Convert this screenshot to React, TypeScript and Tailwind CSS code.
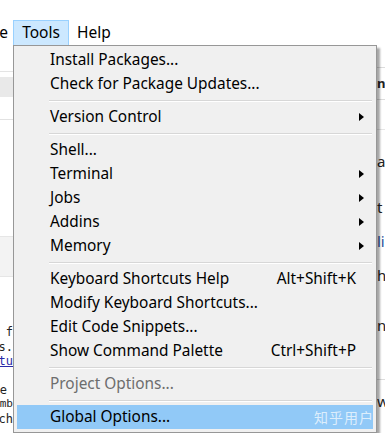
import React from "react";

const font = { fontFamily: '"Noto Sans", "Open Sans", sans-serif' };

function Arrow() {
  return (
    <svg width="5" height="8" viewBox="0 0 5 8" className="block">
      <path d="M0 0 L5 4 L0 8 Z" fill="#000" />
    </svg>
  );
}

type Item =
  | { sep: true }
  | { label: string; shortcut?: string; sub?: boolean; disabled?: boolean; active?: boolean };

const items: Item[] = [
  { label: "Install Packages..." },
  { label: "Check for Package Updates..." },
  { sep: true },
  { label: "Version Control", sub: true },
  { sep: true },
  { label: "Shell..." },
  { label: "Terminal", sub: true },
  { label: "Jobs", sub: true },
  { label: "Addins", sub: true },
  { label: "Memory", sub: true },
  { sep: true },
  { label: "Keyboard Shortcuts Help", shortcut: "Alt+Shift+K" },
  { label: "Modify Keyboard Shortcuts..." },
  { label: "Edit Code Snippets..." },
  { label: "Show Command Palette", shortcut: "Ctrl+Shift+P" },
  { sep: true },
  { label: "Project Options...", disabled: true },
  { sep: true },
  { label: "Global Options...", active: true },
];

export default function App() {
  return (
    <div
      className="relative w-[385px] h-[433px] overflow-hidden bg-white flex flex-col"
      style={font}
    >
      <div className="h-[20px] shrink-0" />
      {/* menubar */}
      <div className="h-[26px] shrink-0 flex items-stretch text-[15.5px] text-black leading-none">
        <div className="w-[13px] overflow-hidden flex items-center justify-end pr-[5px]">e</div>
        <div className="w-[56px] bg-[#cce8ff] border border-[#99d1ff] flex items-center justify-center">
          Tools
        </div>
        <div className="pl-[8px] flex items-center">Help</div>
      </div>
      {/* underlying content */}
      <div className="flex-1 flex">
        <div className="w-[13px] overflow-hidden flex flex-col">
          <div className="h-[26px] border-b border-[#e4e4e4]" />
          <div className="h-[5px]" />
          <div className="h-[20px] bg-[#e9e9e9]" />
          <div className="h-[23px] border-b border-[#e2e2e2]" />
          <div className="h-[116px]" />
          <div className="h-[41px] bg-[#f3f3f3] border-y border-[#e6e6e6]" />
          <div className="h-[48px]" />
          <div
            className="flex flex-col items-end text-[12px] leading-[14.5px] text-[#222] whitespace-nowrap"
            style={{ fontFamily: '"DejaVu Sans Mono", monospace' }}
          >
            <div>f</div>
            <div>s.</div>
            <div className="text-[#2a2aa8] underline">tu</div>
            <div className="h-[14px]" />
            <div className="pr-[6px]">e</div>
            <div className="text-[11px]">mb</div>
            <div>ch</div>
          </div>
        </div>
        <div className="flex-1" />
        <div className="w-[8px] overflow-hidden flex flex-col text-[15px] leading-none text-[#222] whitespace-nowrap">
          <div className="h-[22px] border-b border-[#dcdcdc]" />
          <div className="h-[32px] border-b border-[#dcdcdc] flex items-center text-[13px] font-bold">ns</div>
          <div className="h-[30px] border-b border-[#e6e6e6]" />
          <div className="h-[24px]" />
          <div className="h-[20px]">a</div>
          <div className="h-[26px]" />
          <div className="h-[20px]">t</div>
          <div className="h-[14px]" />
          <div className="h-[20px] text-[#2a4f9a]">li</div>
          <div className="h-[14px]" />
          <div className="h-[20px]">h</div>
          <div className="h-[30px]" />
          <div className="h-[20px]">ne</div>
          <div className="h-[42px] border-b border-[#dcdcdc]" />
          <div className="h-[14px]" />
          <div className="h-[20px]">w</div>
        </div>
      </div>

      {/* dropdown menu */}
      <div className="absolute left-[13px] top-[45px] w-[364px] h-[388px] flex">
        <div className="flex-1 bg-[#f0f0f0] border border-[#979797] shadow-[3px_3px_2px_rgba(0,0,0,0.35)] pt-[2px] px-[3px] text-[15.4px] text-black">
          {items.map((it, i) =>
            "sep" in it ? (
              <div key={i} className="h-[9px] flex flex-col justify-center pl-[32px] pr-[1px]">
                <div className="h-px bg-[#d7d7d7]" />
                <div className="h-px bg-white" />
              </div>
            ) : (
              <div
                key={i}
                className={
                  "h-[24px] flex items-center pl-[33px] pr-[14px] " +
                  (it.active ? "bg-[#91c9f7] " : "") +
                  (it.disabled ? "text-[#6d6d6d]" : "")
                }
              >
                <span className="flex-1 whitespace-nowrap">{it.label}</span>
                {it.shortcut && <span className="whitespace-nowrap pr-[3px]">{it.shortcut}</span>}
                {it.sub && (
                  <span className="-mr-[5px]">
                    <Arrow />
                  </span>
                )}
                {it.active && (
                  <span
                    className="text-[14px] text-white/70 tracking-[1px] -mr-[15px]"
                    style={{ fontFamily: '"Noto Sans CJK SC", sans-serif' }}
                  >
                    知乎用户
                  </span>
                )}
              </div>
            )
          )}
        </div>
      </div>
    </div>
  );
}
